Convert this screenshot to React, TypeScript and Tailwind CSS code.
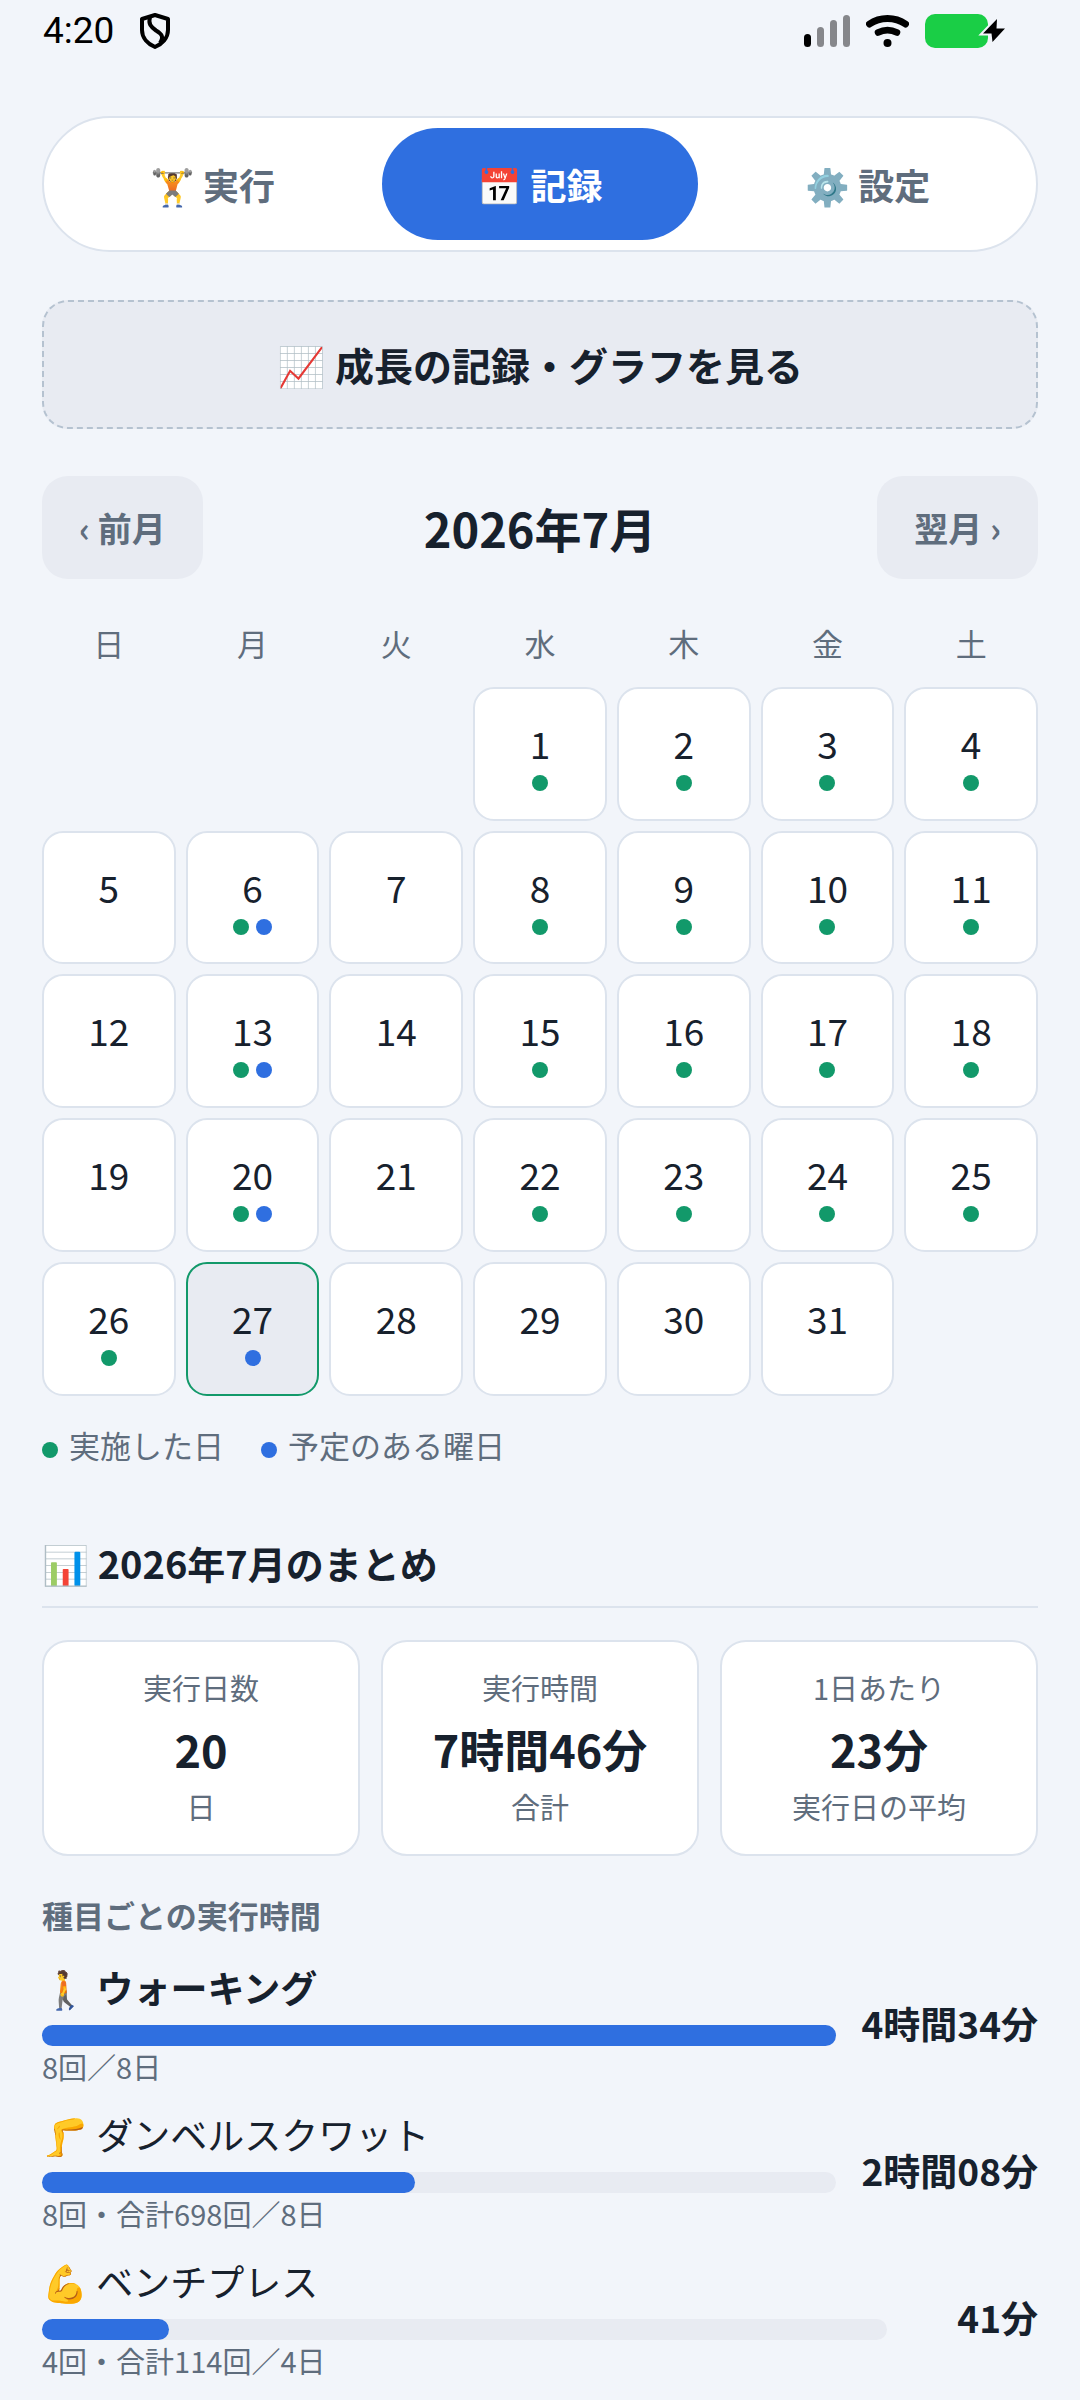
const weekdays = ['日', '月', '火', '水', '木', '金', '土'];

const firstWeekday = 3;
const daysInMonth = 31;
const today = 27;
const doneDays = [1, 2, 3, 4, 6, 8, 9, 10, 11, 13, 15, 16, 17, 18, 20, 22, 23, 24, 25, 26];
const plannedDays = [6, 13, 20, 27];

const tabs = [
  { icon: '🏋️', label: '実行', active: false },
  { icon: '📅', label: '記録', active: true },
  { icon: '⚙️', label: '設定', active: false },
];

const stats = [
  { label: '実行日数', value: '20', note: '日' },
  { label: '実行時間', value: '7時間46分', note: '合計' },
  { label: '1日あたり', value: '23分', note: '実行日の平均' },
];

const exercises = [
  { icon: '🚶', name: 'ウォーキング', percent: 100, note: '8回／8日', time: '4時間34分', strong: true },
  { icon: '🦵', name: 'ダンベルスクワット', percent: 47, note: '8回・合計698回／8日', time: '2時間08分', strong: false },
  { icon: '💪', name: 'ベンチプレス', percent: 15, note: '4回・合計114回／4日', time: '41分', strong: false },
];

function StatusBar() {
  return (
    <header className="flex h-[60px] items-start justify-between pr-[74px] pl-[43px] pt-[9px] text-black">
      <div className="flex items-center gap-[25px]">
        <span className="font-['Roboto'] text-[37px] leading-[44px]">4:20</span>
        <svg className="h-[36px] w-[32px]" viewBox="0 0 32 36" fill="none" stroke="currentColor" strokeWidth="4" strokeLinejoin="round" aria-hidden="true">
          <path d="M16 2 L29 6 V17 C29 25 23 31 16 34 C9 31 3 25 3 17 V6 Z" />
          <path d="M11 4 C9 11 12 14 17 17.500 C23 21 25 24 21 30" />
        </svg>
      </div>
      <div className="flex items-center gap-4 pt-[5px]">
        <svg className="h-[34px] w-[46px]" viewBox="0 0 46 34" aria-hidden="true">
          <rect x="0" y="20" width="7" height="13" rx="3.5" fill="#000" />
          <rect x="13" y="13" width="7" height="20" rx="3.5" fill="#86878b" />
          <rect x="26" y="6" width="7" height="27" rx="3.5" fill="#86878b" />
          <rect x="39" y="1" width="7" height="32" rx="3.5" fill="#86878b" />
        </svg>
        <svg className="h-[34px] w-[43px]" viewBox="0 0 43 34" fill="none" stroke="#000" strokeWidth="7" strokeLinecap="round" aria-hidden="true">
          <path d="M3.5 10 C14 2.500 29 2.500 39.500 10" />
          <path d="M12 18.500 C18 15.500 25 15.500 31 18.500" strokeWidth="6.500" />
          <circle cx="21.500" cy="29" r="4" fill="#000" stroke="none" />
        </svg>
        <svg className="h-[34px] w-[81px]" viewBox="0 0 81 34" aria-hidden="true">
          <rect x="0" y="0" width="63" height="34" rx="10" fill="#1ace46" />
          <path d="M72 5 L58 19.500 H66.500 L67.500 28 L80 14.500 H71.500 Z" fill="#000" stroke="#f2f5fa" strokeWidth="4" paintOrder="stroke" />
        </svg>
      </div>
    </header>
  );
}

function Dot({ planned = false }: { planned?: boolean }) {
  return <span className={planned ? 'size-4 rounded-full bg-[#2f6fe0]' : 'size-4 rounded-full bg-[#12996a]'} />;
}

function Day({ day }: { day: number }) {
  return (
    <button
      type="button"
      className={
        day === today
          ? 'flex aspect-square flex-col items-center justify-center rounded-[21px] border-2 border-[#12996a] bg-[#e8ebf2]'
          : 'flex aspect-square flex-col items-center justify-center rounded-[21px] border-2 border-[#dce3ed] bg-white'
      }
    >
      <span className="text-[37px] leading-[52px]">{day}</span>
      <span className="mt-1.5 flex h-4 gap-[7px]">
        {doneDays.includes(day) && <Dot />}
        {plannedDays.includes(day) && <Dot planned />}
      </span>
    </button>
  );
}

export default function App() {
  return (
    <div className="min-h-screen bg-[#f2f5fa] font-['Noto_Sans_CJK_JP',sans-serif] text-[#17212d]">
      <StatusBar />
      <main className="px-[42px] pt-14">
        <nav className="grid grid-cols-3 gap-[11px] rounded-full border-2 border-[#dce3ed] bg-white p-2.5">
          {tabs.map((tab) => (
            <button
              key={tab.label}
              type="button"
              aria-current={tab.active ? 'page' : undefined}
              className={
                tab.active
                  ? 'h-28 rounded-full bg-[#2f6fe0] text-[36px] leading-[52px] font-bold text-white'
                  : 'h-28 rounded-full text-[36px] leading-[52px] font-bold text-[#5f6d7d]'
              }
            >
              {tab.icon} {tab.label}
            </button>
          ))}
        </nav>

        <button
          type="button"
          className="mt-12 h-[129px] w-full rounded-[26px] border-2 border-dashed border-[#b5c2d0] bg-[#e8ebf2] pb-0.5 text-[39px] leading-[56px] font-bold"
        >
          📈 成長の記録・グラフを見る
        </button>

        <section>
          <div className="mt-[47px] flex items-center justify-between">
            <button type="button" className="h-[103px] rounded-[26px] bg-[#e8ebf2] px-[37px] text-[34px] leading-[50px] font-bold text-[#5f6d7d]">
              ‹ 前月
            </button>
            <h1 className="text-[47px] leading-[68px] font-bold">2026年7月</h1>
            <button type="button" className="h-[103px] rounded-[26px] bg-[#e8ebf2] px-[37px] text-[34px] leading-[50px] font-bold text-[#5f6d7d]">
              翌月 ›
            </button>
          </div>

          <div className="mt-[41px] grid grid-cols-7 gap-2.5 text-center text-[31px] leading-[46px] text-[#5f6d7d]">
            {weekdays.map((name) => (
              <span key={name}>{name}</span>
            ))}
          </div>
          <div className="mt-[21px] grid grid-cols-7 gap-2.5">
            {Array.from({ length: firstWeekday }, (_, i) => (
              <span key={`blank-${i}`} />
            ))}
            {Array.from({ length: daysInMonth }, (_, i) => (
              <Day key={i + 1} day={i + 1} />
            ))}
          </div>

          <div className="mt-[26px] flex gap-[37px] text-[31px] leading-[46px] text-[#5f6d7d]">
            <span className="flex items-end gap-[11px]">
              <span className="flex pb-2.5">
                <Dot />
              </span>
              実施した日
            </span>
            <span className="flex items-end gap-[11px]">
              <span className="flex pb-2.5">
                <Dot planned />
              </span>
              予定のある曜日
            </span>
          </div>
        </section>

        <section className="mt-[68px]">
          <h2 className="border-b-2 border-[#dce3ed] pb-4 text-[38px] leading-[54px] font-bold">📊 2026年7月のまとめ</h2>
          <div className="mt-8 grid grid-cols-3 gap-[21px] text-center">
            {stats.map((stat) => (
              <div key={stat.label} className="rounded-[26px] border-2 border-[#dce3ed] bg-white pt-6 pb-[27px]">
                <p className="text-[29px] leading-[42px] text-[#5f6d7d]">{stat.label}</p>
                <p className="mt-2 text-[45px] leading-[66px] font-bold">{stat.value}</p>
                <p className="mt-[3px] text-[29px] leading-[42px] text-[#5f6d7d]">{stat.note}</p>
              </div>
            ))}
          </div>
        </section>

        <section className="mt-9">
          <h3 className="text-[31px] leading-[46px] font-bold text-[#5f6d7d]">種目ごとの実行時間</h3>
          <ul className="mt-[22px] flex flex-col gap-[21px]">
            {exercises.map((item) => (
              <li key={item.name} className="flex items-center gap-[26px]">
                <div className="flex-1">
                  <p className={item.strong ? 'text-[37px] leading-[54px] font-bold' : 'text-[37px] leading-[54px]'}>
                    {item.icon} {item.name}
                  </p>
                  <div className="mt-[11px] h-[21px] rounded-full bg-[#e8ebf2]">
                    <div className="h-full rounded-full bg-[#2f6fe0]" style={{ width: `${item.percent}%` }} />
                  </div>
                  <p className="text-[29px] leading-[40px] text-[#5f6d7d]">{item.note}</p>
                </div>
                <p className="min-w-[125px] text-right text-[37px] leading-[54px] font-bold">{item.time}</p>
              </li>
            ))}
          </ul>
        </section>
      </main>
    </div>
  );
}
